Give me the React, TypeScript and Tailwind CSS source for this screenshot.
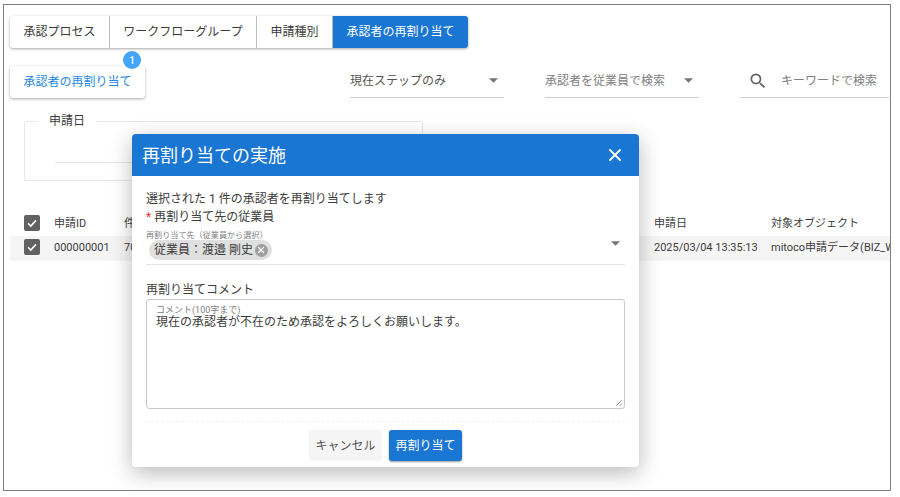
import { X } from 'lucide-react'
import { MdSearch } from 'react-icons/md'

function Caret({ className = '' }: { className?: string }) {
  return (
    <svg className={className} width="9" height="5" viewBox="0 0 10 5">
      <path d="M0 0h10L5 5z" fill="#757575" />
    </svg>
  )
}

function Check() {
  return (
    <div className="w-4 h-4 shrink-0 mb-[3px] rounded-[2px] bg-[#616161] flex items-center justify-center">
      <svg width="12" height="12" viewBox="0 0 12 12" fill="none">
        <path d="M2 6.2l2.8 2.8L10 3.4" stroke="white" strokeWidth="1.6" />
      </svg>
    </div>
  )
}

export default function App() {
  return (
    <div className="w-[900px] h-[497px] bg-white pt-1 pl-[3px] font-['Roboto','Noto_Sans_CJK_JP',sans-serif] text-[#3c3c3c] overflow-hidden">
      <div className="relative w-[888px] h-[487px] border border-[#808080] pt-[11px] pl-[6px] overflow-hidden">
        {/* Tabs */}
        <div className="flex w-[458px] h-[32px] rounded-[3px] shadow-[0_1px_3px_rgba(0,0,0,0.35)] text-[12px]">
          <div className="w-[100px] flex items-center justify-center border-r border-[#bdbdbd] rounded-l-[3px]">承認プロセス</div>
          <div className="w-[147px] flex items-center justify-center border-r border-[#bdbdbd]">ワークフローグループ</div>
          <div className="w-[76px] flex items-center justify-center border-r border-[#bdbdbd]">申請種別</div>
          <div className="w-[135px] flex items-center justify-center bg-[#1976d2] text-white rounded-r-[3px]">承認者の再割り当て</div>
        </div>

        {/* Toolbar */}
        <div className="flex items-start mt-[18px] text-[12px]">
          <div className="relative w-[135px] h-[32px] flex items-center justify-center rounded-[3px] text-[#1e88e5] shadow-[0_1px_3px_rgba(0,0,0,0.35)]">
            承認者の再割り当て
            <div className="absolute -top-[15px] right-[4px] w-[18px] h-[18px] rounded-full bg-[#42a5f5] text-white text-[10px] font-medium flex items-center justify-center">1</div>
          </div>
          <div className="ml-[205px] w-[154px] h-[32px] flex items-center justify-between pr-[6px] pb-[2px] border-b border-[#d0d0d0] text-[#555]">
            <span>現在ステップのみ</span>
            <Caret />
          </div>
          <div className="ml-[41px] w-[154px] h-[32px] flex items-center justify-between pr-[6px] pb-[2px] border-b border-[#d0d0d0] text-[#808080]">
            <span>承認者を従業員で検索</span>
            <Caret />
          </div>
          <div className="ml-[41px] w-[149px] h-[32px] flex items-center pb-[2px] border-b border-[#d0d0d0] text-[#808080]">
            <MdSearch size={20} className="ml-[8px] text-[#616161]" />
            <span className="ml-[13px]">キーワードで検索</span>
          </div>
        </div>

        {/* Date filter */}
        <div className="relative ml-[14px] mt-[23px] w-[399px] h-[60px] border border-[#e8e8e8] rounded-[2px]">
          <span className="absolute -top-[9px] left-[12px] px-[12px] bg-white text-[12px] leading-[16px]">申請日</span>
          <div className="mt-[40px] ml-[30px] w-[345px] border-t border-[#e4e4e4]" />
        </div>

        {/* Table */}
        <div className="mt-[32px] text-[11px]">
          <div className="flex items-center h-[23px] pl-[14px]">
            <Check />
            <span className="ml-[14px] w-[70px] shrink-0">申請ID</span>
            <span className="w-[530px] shrink-0">件</span>
            <span className="w-[117px] shrink-0">申請日</span>
            <span className="whitespace-nowrap">対象オブジェクト</span>
          </div>
          <div className="flex items-center h-[25px] pl-[14px] bg-[#f5f5f5]">
            <Check />
            <span className="ml-[14px] w-[70px] shrink-0">000000001</span>
            <span className="w-[530px] shrink-0">70</span>
            <span className="w-[117px] shrink-0 whitespace-nowrap">2025/03/04 13:35:13</span>
            <span className="whitespace-nowrap">mitoco申請データ(BIZ_W</span>
          </div>
        </div>

        {/* Dialog */}
        <div className="absolute left-[128px] top-[129px] w-[507px] h-[333px] bg-white rounded-[4px] shadow-[0_6px_22px_rgba(0,0,0,0.28)] flex flex-col">
          <div className="h-[42px] shrink-0 bg-[#1976d2] rounded-t-[4px] flex items-center justify-between pl-[10px] pr-[14px] text-white">
            <span className="text-[18px]">再割り当ての実施</span>
            <X size={20} strokeWidth={2.2} />
          </div>
          <div className="px-[14px] flex-1 flex flex-col">
            <p className="mt-[15px] text-[12px] leading-[17px]">選択された 1 件の承認者を再割り当てします</p>
            <p className="mt-[1px] text-[12px] leading-[17px]"><span className="text-[#e53935]">* </span>再割り当て先の従業員</p>
            <div className="relative mt-[4px] h-[35px] border-b border-[#e4e4e4]">
              <div className="text-[9px] leading-[10px] text-[#808080] scale-90 origin-left whitespace-nowrap">再割り当て先（従業員から選択）</div>
              <div className="ml-[3px] inline-flex items-center h-[20px] w-[123px] rounded-full bg-[#e0e0e0] pl-[5px] text-[12px] whitespace-nowrap align-top">
                従業員：渡邉 剛史
                <span className="ml-[2px] w-[13px] h-[13px] rounded-full bg-[#9e9e9e] flex items-center justify-center text-white">
                  <X size={10} strokeWidth={3} />
                </span>
              </div>
              <Caret className="absolute right-[5px] top-[11px]" />
            </div>
            <p className="mt-[18px] text-[12px] leading-[15px]">再割り当てコメント</p>
            <div className="relative mt-[1px] h-[110px] border border-[#c8c8c8] rounded-[3px] pl-[9px] pt-[5px]">
              <div className="text-[9px] leading-[11px] text-[#808080]">コメント(100字まで)</div>
              <div className="text-[12px] leading-[13px]">現在の承認者が不在のため承認をよろしくお願いします。</div>
              <svg className="absolute right-[1px] bottom-[1px]" width="8" height="8" viewBox="0 0 8 8" stroke="#888" strokeWidth="0.8">
                <path d="M1 7l6-6M4.5 7L7 4.5" />
              </svg>
            </div>
          </div>
          <div className="mx-[14px] border-t border-dashed border-[#f2f2f2]" />
          <div className="h-[45px] shrink-0 flex justify-center items-start pt-[8px] gap-[7px] text-[12px]">
            <div className="w-[73px] h-[31px] flex items-center justify-center rounded-[3px] bg-[#f5f5f5] text-[#555]">キャンセル</div>
            <div className="w-[73px] h-[31px] flex items-center justify-center rounded-[3px] bg-[#1976d2] text-white shadow-[0_1px_2px_rgba(0,0,0,0.4)]">再割り当て</div>
          </div>
        </div>
      </div>
    </div>
  )
}
